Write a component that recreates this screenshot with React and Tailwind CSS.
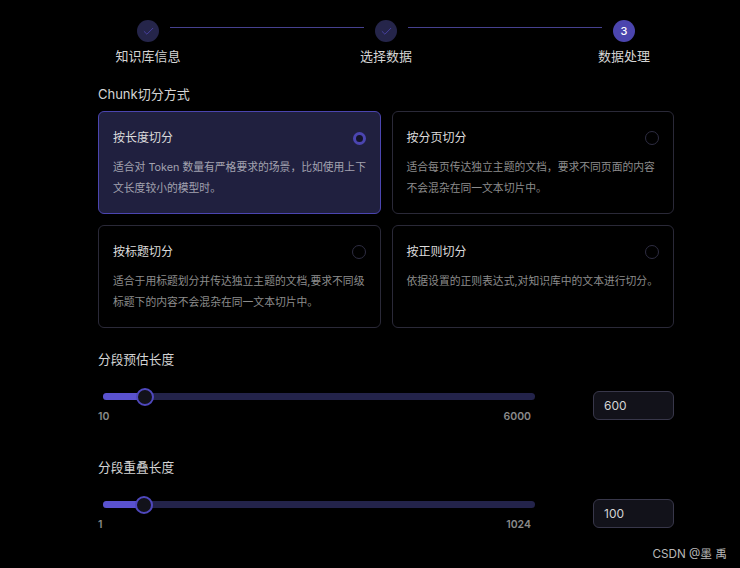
import React from "react";
import { Check } from "lucide-react";

const cjk = "font-['Inter','Noto_Sans_CJK_SC',sans-serif]";

const steps = [
  { label: "知识库信息", done: true },
  { label: "选择数据", done: true },
  { label: "数据处理", done: false, num: 3 },
];

const cards = [
  {
    title: "按长度切分",
    desc: "适合对 Token 数量有严格要求的场景，比如使用上下文长度较小的模型时。",
    active: true,
  },
  {
    title: "按分页切分",
    desc: "适合每页传达独立主题的文档，要求不同页面的内容不会混杂在同一文本切片中。",
  },
  {
    title: "按标题切分",
    desc: "适合于用标题划分并传达独立主题的文档,要求不同级标题下的内容不会混杂在同一文本切片中。",
  },
  {
    title: "按正则切分",
    desc: "依据设置的正则表达式,对知识库中的文本进行切分。",
  },
];

const Step = ({ step }) => (
  <div className="flex w-[44px] flex-col items-center">
    {step.done ? (
      <div className="flex h-[22px] w-[22px] items-center justify-center rounded-full bg-[#25254a] text-[#5048b8]">
        <Check size={13} strokeWidth={1.4} />
      </div>
    ) : (
      <div className="flex h-[22px] w-[22px] items-center justify-center rounded-full bg-[#4b45ae] text-[11px] font-medium text-white">
        {step.num}
      </div>
    )}
    <div className="mt-[4px] whitespace-nowrap text-[13px] leading-[20px] text-[#d4d4d4]">
      {step.label}
    </div>
  </div>
);

const Card = ({ card }) => (
  <div
    className={
      card.active
        ? "h-[103px] rounded-md border border-[#4b45b0] bg-[#20203f] pl-[14px] pr-[12px] pt-[16px]"
        : "h-[103px] rounded-md border border-[#2a2938] bg-black pl-[14px] pr-[12px] pt-[16px]"
    }
  >
    <div className="flex items-center justify-between pr-[2px]">
      <span className="text-[12px] leading-[20px] text-[#dcdcdc]">{card.title}</span>
      {card.active ? (
        <span className="h-[13px] w-[13px] rounded-full border-[3px] border-[#4b45b0] bg-[#14142a]" />
      ) : (
        <span className="h-[14px] w-[14px] rounded-full border border-[#2e2d42]" />
      )}
    </div>
    <p
      className={
        card.active
          ? "mt-[9px] text-[10.8px] leading-[21px] text-[#a3a3b0]"
          : "mt-[9px] text-[10.8px] leading-[21px] text-[#8c8c8c]"
      }
    >
      {card.desc}
    </p>
  </div>
);

const SliderRow = ({ label, min, max, value, percent, className }) => (
  <div className={className}>
    <div className="text-[12.7px] leading-[20px] text-[#d4d4d4]">{label}</div>
    <div className="mt-[21px] flex items-start justify-between">
      <div className="w-[442px] pt-[2px]">
        <div className="relative ml-[5px] h-[7px] w-[432px] rounded-full bg-[#23234a]">
          <div className="h-full rounded-full bg-[#5a52cf]" style={{ width: percent }} />
          <div
            className="absolute top-[-5.5px] ml-[-9px] h-[18px] w-[18px] rounded-full border-2 border-[#4f48bd] bg-[#12121a]"
            style={{ left: percent }}
          />
        </div>
        <div className="mt-[9px] flex justify-between pr-[9px] text-[10.5px] font-semibold leading-[16px] text-[#8a8a8a]">
          <span>{min}</span>
          <span>{max}</span>
        </div>
      </div>
      <div className="flex h-[29px] w-[81px] items-center rounded-md border border-[#38374a] bg-[#12121a] pl-[10px] text-[12px] text-[#d4d4d4]">
        {value}
      </div>
    </div>
  </div>
);

export default function App() {
  return (
    <div className={`relative h-[568px] w-[740px] overflow-hidden bg-black pl-[98px] pr-[66px] pt-[20px] ${cjk}`}>
      <div className="flex items-start px-[28px]">
        <Step step={steps[0]} />
        <div className="mt-[7px] h-px flex-1 bg-[#46418f]" />
        <Step step={steps[1]} />
        <div className="mt-[7px] h-px flex-1 bg-[#46418f]" />
        <Step step={steps[2]} />
      </div>

      <div className="mt-[18px] text-[13px] leading-[20px] text-[#d4d4d4]">Chunk切分方式</div>

      <div className="mt-[7px] grid grid-cols-2 gap-[11px]">
        {cards.map((card) => (
          <Card key={card.title} card={card} />
        ))}
      </div>

      <SliderRow className="mt-[22px]" label="分段预估长度" min="10" max="6000" value="600" percent="42px" />
      <SliderRow className="mt-[33px]" label="分段重叠长度" min="1" max="1024" value="100" percent="41px" />

      <div className="absolute right-[13px] top-[546px] whitespace-nowrap text-[11.7px] leading-[16px] text-[#b8b8b8]">
        CSDN @墨 禹
      </div>
    </div>
  );
}
